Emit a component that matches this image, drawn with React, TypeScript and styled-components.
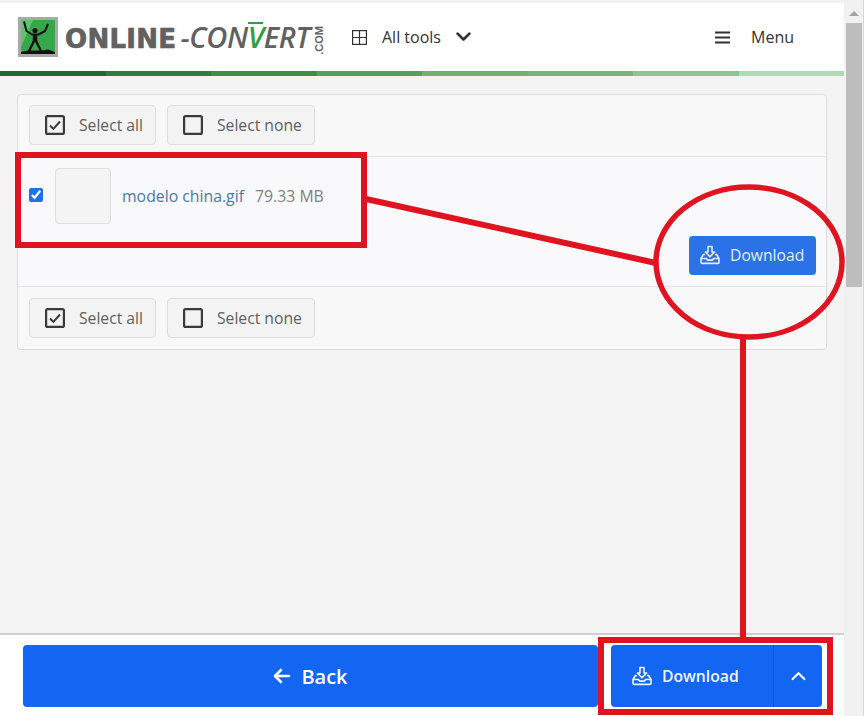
import React from "react";
import styled, { createGlobalStyle } from "styled-components";

const BLUE = "#1266f1";
const SEGMENTS = ["#1f6a34", "#2f7d40", "#3f8f4c", "#54a15e", "#71b178", "#76b57e", "#8cc595", "#b1d9b5"];

const GlobalStyle = createGlobalStyle`
  html, body {
    margin: 0;
    padding: 0;
    background: #f4f4f4;
    overflow: hidden;
  }
  * { box-sizing: border-box; }
`;

const Page = styled.div`
  position: relative;
  width: 864px;
  height: 716px;
  display: flex;
  font-family: "Open Sans", "Noto Sans", sans-serif;
  color: #3a3a3a;
  overflow: hidden;
`;

const Main = styled.div`
  width: 844px;
  display: flex;
  flex-direction: column;
  border-top: 3px solid #f1f1f1;
`;

const Scrollbar = styled.div`
  width: 20px;
  padding: 3px 1px 0 2px;
  background: #f1f1f1;
  border-right: 1px solid #d8d8d8;
`;

const ScrollArrow = styled.div`
  height: 20px;
  display: flex;
  align-items: center;
  justify-content: center;
  background: #f1f1f1;

  &::before {
    content: "";
    border-left: 5px solid transparent;
    border-right: 5px solid transparent;
    border-bottom: 5px solid #a3a3a3;
  }
`;

const ScrollThumb = styled.div`
  height: 264px;
  background: #bdbdbd;
`;

const Header = styled.header`
  height: 68px;
  display: flex;
  align-items: center;
  padding-left: 18px;
  background: #fff;
`;

const Logo = styled.div`
  display: flex;
  align-items: center;
  width: 307px;
  height: 40px;
`;

const LogoMark = styled.svg`
  width: 40px;
  height: 40px;
  flex: none;
`;

const LogoWord = styled.span`
  margin-left: 7px;
  padding-bottom: 1px;
  font-family: "DejaVu Sans", sans-serif;
  font-weight: 700;
  font-size: 26px;
  letter-spacing: 0.3px;
  -webkit-text-stroke: 0.7px #616161;
  color: #616161;
  white-space: nowrap;
`;

const LogoItalic = styled.span`
  font-family: "Open Sans", sans-serif;
  font-style: italic;
  font-weight: 600;
  font-size: 29px;
  letter-spacing: -0.4px;
  margin-left: 4px;
  -webkit-text-stroke: 0;
`;

const LogoGreen = styled.span`
  position: relative;
  color: #2f9e49;

  &::before {
    content: "";
    position: absolute;
    left: 0;
    right: 1px;
    top: 5px;
    height: 2px;
    background: #2f9e49;
  }
`;

const LogoTld = styled.span`
  font-family: "Liberation Sans", sans-serif;
  font-size: 11px;
  font-weight: 700;
  color: #616161;
  writing-mode: vertical-rl;
  transform: rotate(180deg);
  margin-left: 3px;
  margin-top: 6px;
`;

const NavItem = styled.div`
  display: flex;
  align-items: center;
  font-size: 16px;
  color: #333;
`;

const AllTools = styled(NavItem)`
  gap: 15px;
  margin-left: 27px;
`;

const MenuItem = styled(NavItem)`
  gap: 21px;
  margin-left: auto;
  margin-right: 50px;
`;

const ProgressBar = styled.div`
  height: 5px;
  display: flex;
`;

const ProgressSegment = styled.div<{ $color: string }>`
  flex: 1;
  background: ${(p) => p.$color};
`;

const Content = styled.main`
  flex: 1;
  padding: 18px 17px 0;
  background: #f4f4f4;
`;

const Card = styled.section`
  border: 1px solid #dcdcdc;
  border-radius: 4px;
  background: #f8f8f8;
`;

const Toolbar = styled.div<{ $bottom?: boolean }>`
  display: flex;
  gap: 11px;
  padding: ${(p) => (p.$bottom ? "11px" : "10px 11px 11px")};
`;

const SelectButton = styled.button`
  display: flex;
  align-items: center;
  gap: 14px;
  height: 40px;
  padding: 0 12px 0 15px;
  border: 1px solid #dedede;
  border-radius: 4px;
  background: #f3f3f3;
  font: inherit;
  font-size: 15.7px;
  color: #5f5f5f;
`;

const FileRow = styled.div`
  height: 131px;
  position: relative;
  display: flex;
  align-items: flex-start;
  padding: 11px 11px;
  background: #f9f9fc;
  border-top: 1px solid #e3e3e8;
  border-bottom: 1px solid #e3e3e8;
`;

const FileCheck = styled.input`
  width: 14px;
  height: 14px;
  margin: 20px 12px 0 0;
  accent-color: #1a73e8;
`;

const Thumb = styled.div`
  width: 56px;
  height: 56px;
  border: 1px solid #dedede;
  border-radius: 4px;
  background: #f4f4f4;
`;

const FileName = styled.a`
  margin: 17px 0 0 11px;
  font-size: 15.8px;
  color: #4d78a8;
`;

const FileSize = styled.span`
  margin: 17px 0 0 11px;
  font-size: 15.8px;
  color: #808080;
`;

const RowDownload = styled.button`
  position: absolute;
  right: 10px;
  top: 79px;
  display: flex;
  align-items: center;
  gap: 10px;
  width: 127px;
  height: 39px;
  padding: 0 0 2px 11px;
  border: none;
  border-radius: 4px;
  background: #2a72e5;
  color: #e4eeff;
  font: inherit;
  font-size: 15.7px;
`;

const Footer = styled.footer`
  height: 83px;
  display: flex;
  gap: 13px;
  padding: 10px 22px 9px 23px;
  background: #fff;
  border-top: 2px solid #cfcfcf;
`;

const BackButton = styled.button`
  flex: 1;
  display: flex;
  align-items: center;
  justify-content: center;
  gap: 10px;
  border: none;
  border-radius: 4px;
  background: ${BLUE};
  color: #fff;
  font: inherit;
  font-size: 20px;
  font-weight: 600;
`;

const SplitButton = styled.div`
  width: 211px;
  display: flex;
  border-radius: 4px;
  background: ${BLUE};
  color: #f2f6ff;
`;

const SplitMain = styled.div`
  width: 163px;
  display: flex;
  align-items: center;
  gap: 10px;
  padding-left: 21px;
  font-size: 15.7px;
  font-weight: 600;
  border-right: 1px solid #0d54c9;
`;

const SplitToggle = styled.div`
  flex: 1;
  display: flex;
  align-items: center;
  justify-content: center;
`;

// the red marks someone drew on top of the screenshot
const Annotations = styled.svg`
  position: absolute;
  left: 0;
  top: 0;
  pointer-events: none;
`;

const Download = ({ size = 20 }: { size?: number }) => (
  <svg width={size} height={size} viewBox="0 0 20 20" fill="none" stroke="currentColor" strokeWidth="1.6" strokeLinejoin="round">
    <path d="M8 1.5h4v5.5h2.6L10 11.8 5.4 7H8z" />
    <path d="M5 9.5H3.4L1 13.5v3.7c0 .7.5 1.2 1.2 1.2h15.6c.7 0 1.2-.5 1.2-1.2v-3.7l-2.4-4H15" />
    <path d="M1 13.5h5.5l1 1.6h5l1-1.6H19" />
  </svg>
);

const Checked = ({ on }: { on: boolean }) => (
  <svg width="20" height="20" viewBox="0 0 20 20" fill="none" stroke="#3a3a3a">
    <rect x="1.1" y="1.1" width="17.8" height="17.8" rx="1.5" strokeWidth="2.2" />
    {on && <path d="M5 10.5l3.4 3.4L15 6.5" strokeWidth="2" />}
  </svg>
);

const Chevron = ({ up, color, w }: { up?: boolean; color: string; w: number }) => (
  <svg width={w} height={w * 0.65} viewBox="0 0 14 9" fill="none" stroke={color} strokeWidth={up ? 2 : 2.5} strokeLinecap="round" strokeLinejoin="round">
    <path d={up ? "M1.5 7.5L7 2l5.5 5.5" : "M1.5 1.5L7 7l5.5-5.5"} />
  </svg>
);

const App = () => (
  <>
    <GlobalStyle />
    <Page>
      <Main>
        <Header>
          <Logo>
            <LogoMark viewBox="0 0 40 40">
              <rect width="40" height="40" fill="#a9a9a9" />
              <rect x="3" y="3" width="34" height="34" fill="#37a84a" />
              <path d="M3 30L15 3H3z" fill="#63c267" />
              <g stroke="#111" fill="none" strokeLinejoin="round">
                <path d="M6 4.5L8.5 14L14 17.5H20.5L27 14L30 7" strokeWidth="2" />
                <path d="M17 17V25" strokeWidth="4.5" />
                <path d="M16 24L11 34M18 24L23 34" strokeWidth="2.4" />
              </g>
              <circle cx="17" cy="13.5" r="2.6" fill="#111" />
              <path d="M3 37V35L10 33.5H24L30 32.5L37 35V37z" fill="#111" />
            </LogoMark>
            <LogoWord>
              ONLINE
              <LogoItalic>
                -CON<LogoGreen>V</LogoGreen>ERT
              </LogoItalic>
            </LogoWord>
            <LogoTld>.COM</LogoTld>
          </Logo>
          <AllTools>
            <svg width="15" height="15" viewBox="0 0 15 15" fill="none" stroke="#333" strokeWidth="1.2">
              <rect x=".6" y=".6" width="13.8" height="13.8" />
              <path d="M7.5 .6v13.8M.6 7.5h13.8" />
            </svg>
            All tools
            <Chevron color="#333" w={15} />
          </AllTools>
          <MenuItem>
            <svg width="15" height="13" viewBox="0 0 15 13" fill="none" stroke="#333" strokeWidth="2">
              <path d="M0 1.5h15M0 6.5h15M0 11.5h15" />
            </svg>
            Menu
          </MenuItem>
        </Header>
        <ProgressBar>
          {SEGMENTS.map((color) => (
            <ProgressSegment key={color} $color={color} />
          ))}
        </ProgressBar>
        <Content>
          <Card>
            <Toolbar>
              <SelectButton>
                <Checked on />
                Select all
              </SelectButton>
              <SelectButton>
                <Checked on={false} />
                Select none
              </SelectButton>
            </Toolbar>
            <FileRow>
              <FileCheck type="checkbox" defaultChecked />
              <Thumb />
              <FileName>modelo china.gif</FileName>
              <FileSize>79.33 MB</FileSize>
              <RowDownload>
                <Download />
                Download
              </RowDownload>
            </FileRow>
            <Toolbar $bottom>
              <SelectButton>
                <Checked on />
                Select all
              </SelectButton>
              <SelectButton>
                <Checked on={false} />
                Select none
              </SelectButton>
            </Toolbar>
          </Card>
        </Content>
        <Footer>
          <BackButton>
            <svg width="18" height="16" viewBox="0 0 18 16" fill="none" stroke="#fff" strokeWidth="2.6" strokeLinecap="round" strokeLinejoin="round">
              <path d="M8 2L2 8l6 6M2.5 8H16" />
            </svg>
            Back
          </BackButton>
          <SplitButton>
            <SplitMain>
              <Download />
              Download
            </SplitMain>
            <SplitToggle>
              <Chevron up color="#fff" w={15} />
            </SplitToggle>
          </SplitButton>
        </Footer>
      </Main>
      <Scrollbar>
        <ScrollArrow />
        <ScrollThumb />
      </Scrollbar>
      <Annotations width="864" height="716" viewBox="0 0 864 716" fill="none" stroke="#e01420" strokeWidth="6">
        <rect x="18" y="155" width="346" height="90" />
        <path d="M366 199L656 263" />
        <ellipse cx="749" cy="262" rx="93" ry="75" strokeWidth="5.5" />
        <path d="M743 338V638" />
        <rect x="601" y="640" width="229" height="72" />
      </Annotations>
    </Page>
  </>
);

export default App;
